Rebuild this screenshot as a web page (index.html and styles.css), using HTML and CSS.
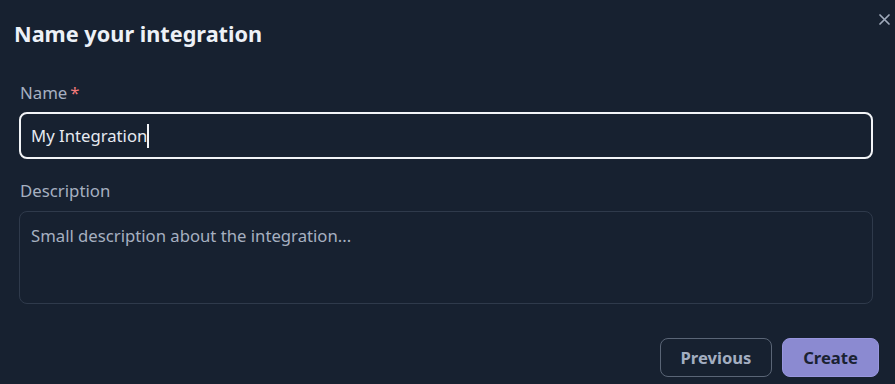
FILE: index.html
```html
<!DOCTYPE html>
<html>
<head>
<meta charset="utf-8">
<link rel="stylesheet" href="styles.css">
</head>
<body>
<div class="modal">
  <header class="modal-header">
    <h2 class="title">Name your integration</h2>
    <button class="close" aria-label="Close">
      <svg width="11" height="11" viewBox="0 0 11 11"><path d="M1 1L10 10M10 1L1 10" stroke="currentColor" stroke-width="1.7" stroke-linecap="round"/></svg>
    </button>
  </header>
  <div class="modal-body">
    <div class="field">
      <label class="label">Name<span class="req">*</span></label>
      <div class="input focused"><span class="value">My Integration</span><span class="caret"></span></div>
    </div>
    <div class="field">
      <label class="label">Description</label>
      <div class="textarea"><span class="placeholder">Small description about the integration...</span></div>
    </div>
  </div>
  <footer class="modal-footer">
    <button class="btn btn-outline">Previous</button>
    <button class="btn btn-primary">Create</button>
  </footer>
</div>
</body>
</html>
```

FILE: styles.css
```css
* { box-sizing: border-box; }
html, body { margin: 0; padding: 0; }
body {
  background: #172130;
  font-family: "Noto Sans", "Open Sans", sans-serif;
  color: #e2e8f0;
  width: 895px;
  height: 384px;
  overflow: hidden;
}
.modal { position: relative; padding: 0 16px 0 19px; }
.modal-header { padding: 19px 0 0 0; margin-left: -5px; }
.title {
  margin: 0;
  font-size: 21.7px;
  font-weight: 700;
  line-height: 30px;
  color: #edf1f7;
}
.close {
  position: absolute;
  top: 12px;
  right: 4px;
  width: 14px;
  height: 14px;
  padding: 0;
  background: none;
  border: 0;
  color: #a0aabb;
  display: flex;
  align-items: center;
  justify-content: center;
}
.modal-body { padding-top: 32px; padding-right: 6px; }
.field { margin-bottom: 20px; }
.field + .field { margin-bottom: 0; }
.label {
  display: block;
  margin-left: 1px;
  font-size: 16.8px;
  line-height: 24px;
  color: #a6b0c0;
  margin-bottom: 7px;
}
.field + .field .label { margin-bottom: 8px; }
.req { color: #f27a7a; margin-left: 3px; }
.input {
  height: 47px;
  border: 2px solid #f2f4f7;
  border-radius: 8px;
  padding: 0 10px;
  display: flex;
  align-items: center;
  font-size: 16.7px;
  color: #e6eaf0;
}
.caret { width: 2px; height: 24px; background: #f2f4f7; margin-left: 0; }
.textarea {
  height: 93px;
  border: 1px solid #2f3a4b;
  border-radius: 8px;
  padding: 12px 11px;
  font-size: 16.7px;
  line-height: 24px;
  color: #a6b0c0;
}
.modal-footer {
  display: flex;
  justify-content: flex-end;
  gap: 10px;
  padding-top: 34px;
}
.btn {
  height: 39px;
  border-radius: 8px;
  font-family: inherit;
  font-size: 16.6px;
  font-weight: 700;
  padding: 0;
}
.btn-outline {
  background: transparent;
  border: 1px solid #5a6576;
  color: #a3aec0;
  width: 112px;
}
.btn-primary {
  background: #8b8ad1;
  border: 1px solid #9896de;
  color: #1a2232;
  width: 97px;
}
```
